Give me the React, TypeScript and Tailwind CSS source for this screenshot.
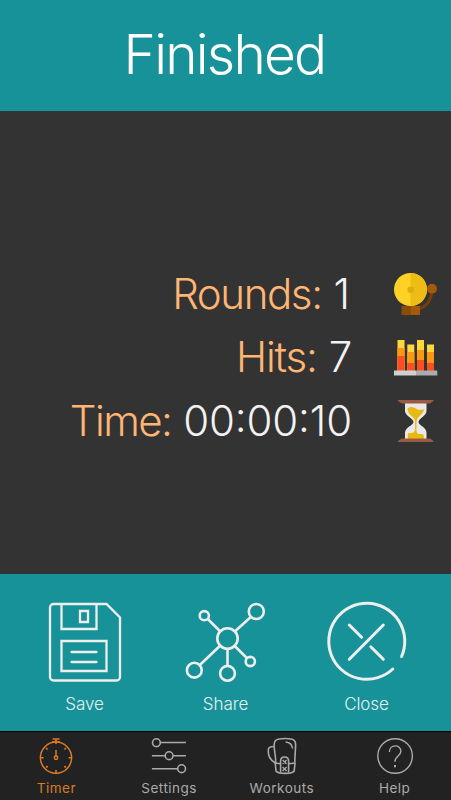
import React from 'react';

const BellIcon: React.FC = () => (
  <svg viewBox="390 270 50 48" className="w-[50px] h-12">
    <path d="M432 292C431 301 427 306 419 309" fill="none" stroke="#733f08" strokeWidth="3" />
    <circle cx="410.5" cy="289.5" r="16.5" fill="#fdd224" />
    <path d="M410.5 273a16.500 16.500 0 0 1 0 33z" fill="#edbd15" />
    <circle cx="410.700" cy="289.700" r="3.300" fill="#e0ac12" />
    <path d="M401.500 306h9.500v9h-9.500z" fill="#8a4d08" />
    <path d="M411 306h9v9h-9z" fill="#a65a08" />
    <circle cx="432" cy="288.700" r="4.900" fill="#a55a0a" />
  </svg>
);

const hitBars = [
  { x: 397.5, top: 340, mid: 348, low: 356 },
  { x: 407.3, top: 344.5, mid: 352, low: 363 },
  { x: 417, top: 340, mid: 350, low: 360 },
  { x: 427, top: 344.5, mid: 352, low: 363 },
];

const HitsIcon: React.FC = () => (
  <svg viewBox="390 333 50 48" className="w-[50px] h-12">
    {hitBars.map((bar) => (
      <g key={bar.x}>
        <rect x={bar.x} y={bar.top} width="7" height={371 - bar.top} fill="#fdd73c" />
        <rect x={bar.x} y={bar.mid} width="7" height={371 - bar.mid} fill="#fd9810" />
        <rect x={bar.x} y={bar.low} width="7" height={371 - bar.low} fill="#fb4f22" />
      </g>
    ))}
    <path d="M394 370.500h22v5h-22z" fill="#d0d0d2" />
    <path d="M416 370.500h21.300v5H416z" fill="#acabb1" />
  </svg>
);

const HourglassIcon: React.FC = () => (
  <svg viewBox="390 397 50 48" className="w-[50px] h-12">
    <path d="M405 403h21.500v8c0 5-8 7.500-8 11s8 5 8 11v8.500H405V433c0-6 8.500-7.500 8.500-11s-8.500-6-8.500-11z" fill="#e9e9e9" />
    <path d="M407.500 408.500c4-3 7-.5 10 1 2.500 1 4.500-.5 6.500 0 0 4-6.500 7-7.500 11.500v9c0 3.500 1.800 4.500 4.300 4 2-.4 3 .5 3 2v3.500h-16v-6c2.500-1 6.500.5 7.300-4v-8.500c-.8-4.500-7.600-6-7.600-12.500z" fill="#e9b913" />
    <path d="M398 400h35.500v1l-3.500 2.500h-28l-4-2.500zM398 442h35.500v-1l-3.500-2.500h-28l-4 2.500z" fill="#9b5b42" />
  </svg>
);

const SaveIcon: React.FC = () => (
  <svg viewBox="44.500 598 80 90" className="w-20 h-[90px]" fill="none" stroke="#eeeeee" strokeWidth="2.300">
    <path d="M53 604h53l13.500 13.500V677a3.500 3.500 0 0 1-3.500 3.500H53a3.500 3.500 0 0 1-3.500-3.500v-69.500A3.500 3.500 0 0 1 53 604z" />
    <path d="M61 604v25h35v-25M79.500 611h8v11h-8zM61 641h45v30H61z" />
    <path d="M71 652h25M71 662h25" strokeLinecap="round" />
  </svg>
);

const ShareIcon: React.FC = () => (
  <svg viewBox="181.200 598 90 90" className="w-[90px] h-[90px]" fill="none" stroke="#eeeeee" strokeWidth="2.600">
    <circle cx="227.700" cy="638.500" r="10.200" />
    <circle cx="256.500" cy="611.500" r="7.500" />
    <circle cx="204.500" cy="615.700" r="4.600" />
    <circle cx="194.500" cy="670.200" r="7.400" />
    <circle cx="227.700" cy="673.300" r="7.400" />
    <circle cx="250.500" cy="661.500" r="4.600" />
    <path d="M208 619l12 12M251 617l-16 14.500M220 646l-20 19M227.700 649v17M235 646l12 12" />
  </svg>
);

const CloseIcon: React.FC = () => (
  <svg viewBox="322.200 598 90 90" className="w-[90px] h-[90px]" fill="none" stroke="#eeeeee" strokeWidth="3" strokeLinecap="round">
    <path d="M401.800 656.500A38 38 0 1 0 393 669" />
    <path d="M349.500 625l12.300 12.300M371 646.800l12.500 12.500M383.500 625l-34 34.300" />
  </svg>
);

const TimerIcon: React.FC = () => (
  <svg viewBox="36.400 736 40 40" className="w-10 h-10" fill="none" stroke="#dc7b25" strokeWidth="1.500">
    <circle cx="56.400" cy="757.700" r="15.600" />
    <circle cx="56.400" cy="757.700" r="1.700" />
    <path d="M56.400 756v-6M53 739h7M56.400 739v5M52.500 742h8" />
    <path d="M41 757.700h3M69 757.700h3M56.400 770v3M46.500 748l1.500 1.500M66.300 748l-1.500 1.500M46.500 767.600l1.500-1.500M66.300 767.600l-1.500-1.500" />
  </svg>
);

const SettingsIcon: React.FC = () => (
  <svg viewBox="149.100 736 40 40" className="w-10 h-10" fill="none" stroke="#aaaaaa" strokeWidth="1.600">
    <circle cx="156.500" cy="742.700" r="3.900" />
    <circle cx="169.200" cy="755.700" r="3.900" />
    <circle cx="181.700" cy="768.700" r="3.900" />
    <path d="M160.500 742.500H186M152 755.700h13.500M173 755.700h13M152 768.700h25.800" />
  </svg>
);

const WorkoutsIcon: React.FC = () => (
  <svg viewBox="261.900 736 40 40" className="w-10 h-10" fill="none" stroke="#aaaaaa" strokeWidth="1.600" strokeLinejoin="round">
    <path d="M275.500 763c.5-6-1.500-12-1.500-18 0-4 1.500-5.500 5-6 4-.6 8-.6 12 0 3.500.5 4.500 2 4.500 5.500 0 6-.8 12-.8 18" />
    <path d="M273.500 746.500c-3 0-5 .8-5.300 3-.5 6 1.300 10.300 7 13.500" />
    <path d="M275 762.500l1 8.800c3.500 2.700 14.500 2.700 18 0l1-8.800M275 763l5 .8M289 763.800l5.700-.8" />
    <path d="M280.500 772.500V761c0-5.300 8-5.300 8 0v11.500" />
    <path d="M282.500 760l4 4m0-4l-4 4M282.500 767l4 4m0-4l-4 4" strokeWidth="1.400" />
    <path d="M285.500 742c4 .3 6.500 2.500 7 6.500" />
  </svg>
);

const HelpIcon: React.FC = () => (
  <svg viewBox="374.600 736 40 40" className="w-10 h-10" fill="none" stroke="#aaaaaa" strokeWidth="1.400">
    <circle cx="394.700" cy="756" r="17.300" />
    <path d="M389 752c0-8 11.500-8 11.500-.7 0 5-6 4.500-6 10.500" />
    <path d="M394.600 765v2.200" strokeWidth="2" />
  </svg>
);

const stats = [
  { label: 'Rounds:', value: '1', Icon: BellIcon, tracking: 'tracking-[-1.400px]', spacing: 'ml-10' },
  { label: 'Hits:', value: '7', Icon: HitsIcon, tracking: 'tracking-[-1.200px]', spacing: 'ml-[38px]' },
  { label: 'Time:', value: '00:00:10', Icon: HourglassIcon, tracking: 'tracking-[-1.600px]', spacing: 'ml-[38px]' },
];

const actions = [
  { label: 'Save', Icon: SaveIcon },
  { label: 'Share', Icon: ShareIcon },
  { label: 'Close', Icon: CloseIcon },
];

const tabs = [
  { label: 'Timer', Icon: TimerIcon, active: true },
  { label: 'Settings', Icon: SettingsIcon, active: false },
  { label: 'Workouts', Icon: WorkoutsIcon, active: false },
  { label: 'Help', Icon: HelpIcon, active: false },
];

// Colons between digits sit at the middle of the digit height
const StatValue: React.FC<{ value: string }> = ({ value }) => (
  <span className="text-[#f2f2f2] tracking-[-0.150px]">
    {value.split(':').map((part, i) => (
      <React.Fragment key={i}>
        {i > 0 && <span className="relative -top-1">:</span>}
        {part}
      </React.Fragment>
    ))}
  </span>
);

const App: React.FC = () => {
  return (
    <div className="flex flex-col w-[451px] h-[800px] overflow-hidden bg-[#333333] font-['Inter','Liberation_Sans',sans-serif]">
      <header className="h-[111px] shrink-0 flex items-center justify-center pb-0.5 pr-0.5 bg-[#189299]">
        <h1 className="text-[55px] leading-none font-light tracking-[-1.800px] text-white">Finished</h1>
      </header>

      {/* Workout summary */}
      <main className="flex-1 pt-[151px] pr-[11px]">
        {stats.map(({ label, value, Icon, tracking, spacing }) => (
          <div key={label} className="flex items-center justify-end h-[63.500px]">
            <div className="flex gap-3 text-[42px] leading-none font-light whitespace-nowrap">
              <span className={`text-[#ffb573] ${tracking}`}>{label}</span>
              <StatValue value={value} />
            </div>
            <div className={spacing}>
              <Icon />
            </div>
          </div>
        ))}
      </main>

      {/* Actions */}
      <section className="h-[157px] shrink-0 grid grid-cols-3 px-[14px] pt-6 bg-[#189299]">
        {actions.map(({ label, Icon }) => (
          <button key={label} className="flex flex-col items-center">
            <Icon />
            <span className="mt-1.5 text-[17px] leading-5 font-light tracking-[-0.100px] text-[#e4f0f0]">{label}</span>
          </button>
        ))}
      </section>

      <nav className="h-[69px] shrink-0 grid grid-cols-4 border-t border-black bg-[#222222]">
        {tabs.map(({ label, Icon, active }) => (
          <button key={label} className={`flex flex-col items-center pt-1 ${active ? 'text-[#dc7b25]' : 'text-[#aaaaaa]'}`}>
            <Icon />
            <span className="mt-1 text-[13.500px] leading-4 tracking-[0.500px]">{label}</span>
          </button>
        ))}
      </nav>
    </div>
  );
};

export default App;
